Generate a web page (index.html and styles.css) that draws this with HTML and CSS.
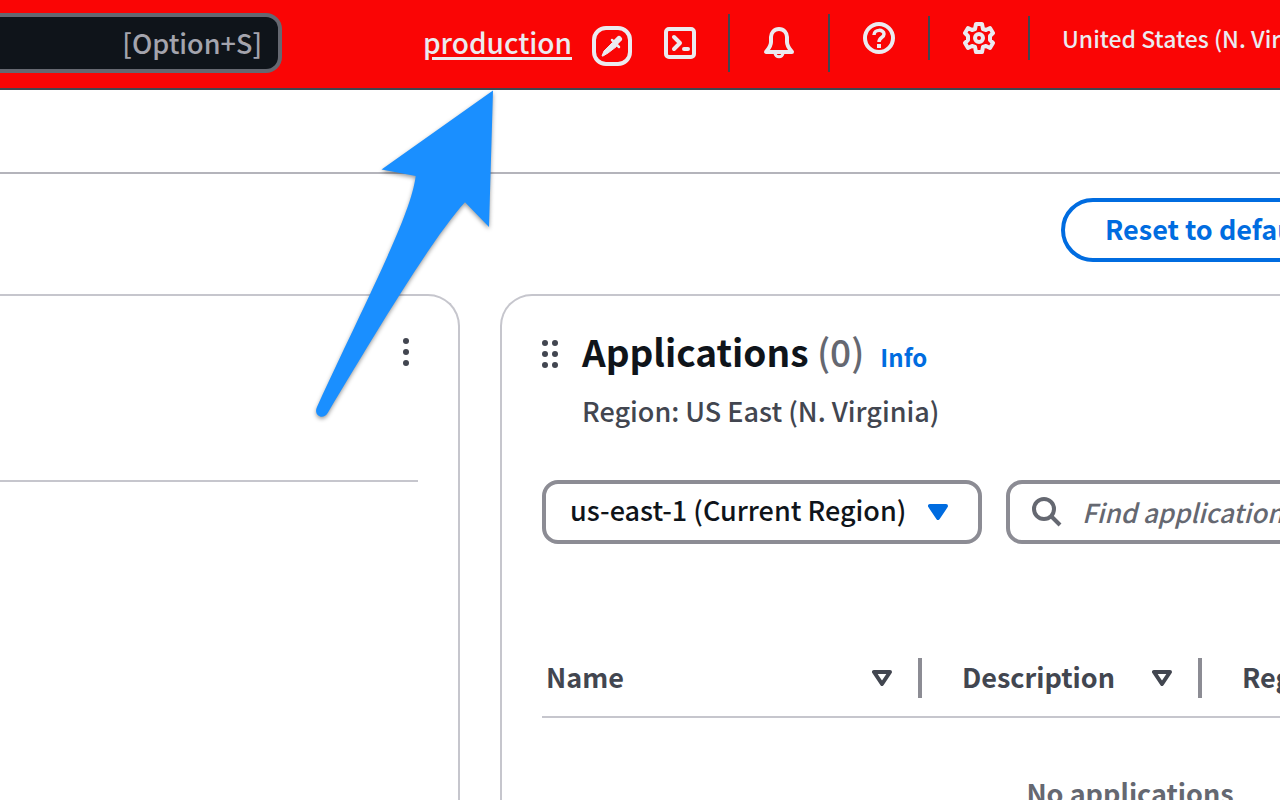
FILE: index.html
```html
<!DOCTYPE html>
<html lang="en">
<head>
<meta charset="utf-8">
<title>Console Home</title>
<link rel="stylesheet" href="styles.css">
</head>
<body>
<header class="topbar">
  <input class="topbar-search" type="text" aria-label="Search" placeholder="[Option+S]">
  <nav class="account">
    <a class="account-link" href="#">production</a>
    <button class="icon-button" type="button" aria-label="Pick colour">
      <svg width="40" height="40" viewBox="0 0 40 40" fill="none">
        <rect x="2" y="2" width="36" height="36" rx="12" stroke="currentColor" stroke-width="4"/>
        <path d="M10 30l2-5 8.500-8.500 4 4L16 27l-5 3z" fill="currentColor" stroke="currentColor"/>
        <path d="M20 14l7 7" stroke="currentColor" stroke-width="2.500" stroke-linecap="round"/>
        <path d="M24 16l3-3" stroke="currentColor" stroke-width="6" stroke-linecap="round"/>
      </svg>
    </button>
  </nav>
  <nav class="tools tools-main">
    <button class="icon-button tool tool-shell" type="button" aria-label="CloudShell">
      <svg width="32" height="32" viewBox="0 0 32 32" fill="none" stroke="currentColor" stroke-width="4" stroke-linejoin="round" stroke-linecap="round">
        <rect x="2" y="2" width="28" height="28" rx="3"/>
        <path d="M10 10l6 6-6 6M20 22h4"/>
      </svg>
    </button>
    <button class="icon-button tool" type="button" aria-label="Notifications">
      <svg width="32" height="32" viewBox="0 0 32 32" fill="none" stroke="currentColor" stroke-width="4" stroke-linejoin="round">
        <path d="M16 2c-5 0-8 4-8 8v5c0 4-2 6-5 10h26c-3-4-5-6-5-10v-5c0-4-3-8-8-8z"/>
        <path d="M12 26c0 5 8 5 8 0" stroke-width="3"/>
      </svg>
    </button>
  </nav>
  <nav class="tools tools-side">
    <button class="icon-button tool" type="button" aria-label="Help">
      <svg width="32" height="32" viewBox="0 0 32 32" fill="none" stroke="currentColor" stroke-width="4">
        <circle cx="16" cy="16" r="14"/>
        <path d="M11 13c0-6 10-6 10-1 0 4-5 3-5 8" stroke-width="3.500"/>
        <path d="M16 22v4"/>
      </svg>
    </button>
    <button class="icon-button tool" type="button" aria-label="Settings">
      <svg width="32" height="32" viewBox="0 0 32 32" fill="none" stroke="currentColor" stroke-width="4" stroke-linejoin="round">
        <path d="M13 2h6l1 5 3 1 4-2 3 5-3 3v4l3 3-3 5-4-2-3 1-1 5h-6l-1-5-3-1-4 2-3-5 3-3v-4l-3-3 3-5 4 2 3-1z"/>
        <circle cx="16" cy="16" r="4"/>
      </svg>
    </button>
    <button class="icon-button region" type="button">United States (N. Virginia)</button>
  </nav>
</header>
<div class="subbar"></div>
<main class="page">
  <div class="actions">
    <button class="reset" type="button">Reset to default layout</button>
  </div>
  <div class="board">
    <section class="card card-left" aria-label="Widget">
      <div class="card-tools">
        <button class="icon-button" type="button" aria-label="More actions">
          <svg width="24" height="32" viewBox="0 0 24 32" fill="currentColor"><circle cx="12" cy="5" r="3"/><circle cx="12" cy="16" r="3"/><circle cx="12" cy="27" r="3"/></svg>
        </button>
      </div>
    </section>
    <section class="card card-apps">
      <div class="card-head">
        <svg class="grip" width="16" height="28" viewBox="0 0 16 28" fill="currentColor"><circle cx="3" cy="3" r="3"/><circle cx="13" cy="3" r="3"/><circle cx="3" cy="14" r="3"/><circle cx="13" cy="14" r="3"/><circle cx="3" cy="25" r="3"/><circle cx="13" cy="25" r="3"/></svg>
        <div>
          <div class="title-row">
            <h2 class="title">Applications <span class="count">(0)</span></h2>
            <a class="info" href="#">Info</a>
          </div>
          <p class="subtitle">Region: US East (N. Virginia)</p>
        </div>
      </div>
      <div class="filters">
        <div class="select-wrap">
          <select class="select" aria-label="Region">
            <option>us-east-1 (Current Region)</option>
          </select>
          <svg class="caret" width="20" height="16" viewBox="0 0 20 16"><path d="M2 2h16l-8 12z" fill="currentColor" stroke="currentColor" stroke-width="4" stroke-linejoin="round"/></svg>
        </div>
        <label class="find">
          <svg width="30" height="30" viewBox="0 0 30 30" fill="none" stroke="currentColor" stroke-width="4"><circle cx="12" cy="12" r="10"/><path d="M19 19l9 9"/></svg>
          <input class="find-input" type="text" aria-label="Find applications" placeholder="Find applications">
        </label>
      </div>
      <table class="apps">
        <colgroup><col class="col-name"><col class="col-mid"><col><col></colgroup>
        <thead>
          <tr>
            <th><div class="th"><span class="th-text">Name</span> <svg width="20" height="16" viewBox="0 0 20 16"><path d="M2 2h16l-8 12z" fill="none" stroke="currentColor" stroke-width="4" stroke-linejoin="round"/></svg></div></th>
            <th><div class="th"><span class="th-text">Description</span> <svg width="20" height="16" viewBox="0 0 20 16"><path d="M2 2h16l-8 12z" fill="none" stroke="currentColor" stroke-width="4" stroke-linejoin="round"/></svg></div></th>
            <th colspan="2"><div class="th"><span class="th-text">Region</span></div></th>
          </tr>
        </thead>
        <tbody>
          <tr><td class="empty" colspan="4">No applications</td></tr>
        </tbody>
      </table>
    </section>
  </div>
</main>
<svg class="pointer" width="190" height="336" viewBox="310 86 190 336" aria-hidden="true">
  <path d="M493 90.500L381.500 169.500 415.700 176C411 215 370 292 317 407C313 415 323 421 328 412.500C375 334 433 237 465 202.300L489 227z" fill="#1a8fff"/>
</svg>
</body>
</html>
```
FILE: styles.css
```css
* {
  box-sizing: border-box;
}

body {
  margin: 0;
  min-height: 100vh;
  overflow: hidden;
  background: #fff;
  color: #0f141a;
  font-family: "Noto Sans CJK JP", "Noto Sans", sans-serif;
  font-size: 27px;
  font-weight: 500;
  line-height: 40px;
}

button,
input,
select {
  font: inherit;
}

.topbar {
  display: flex;
  height: 90px;
  overflow: hidden;
  background: #fa0505;
  border-bottom: 2px solid #424650;
  color: #ebebf0;
}

.topbar-search {
  flex: none;
  width: 282px;
  height: 60px;
  margin: 13px 0 0;
  padding: 0 16px 2px;
  appearance: none;
  background: #0f141a;
  border: 4px solid #656871;
  border-left: 0;
  border-radius: 0 16px 16px 0;
  color: #a4a4ad;
  text-align: right;
}

.topbar-search::placeholder {
  color: #a4a4ad;
  opacity: 1;
}

.icon-button {
  display: flex;
  align-items: center;
  justify-content: center;
  flex: none;
  padding: 0;
  background: none;
  border: 0;
  color: inherit;
}

.account {
  display: flex;
  align-items: center;
  justify-content: flex-end;
  gap: 20px;
  flex: none;
  width: 350px;
  height: 92px;
}

.account-link {
  padding-bottom: 8px;
  color: inherit;
  font-size: 28px;
  text-decoration-thickness: 3px;
  text-underline-offset: 3px;
}

.tools {
  display: flex;
  flex: none;
}

.tool {
  width: 100px;
  border-right: 2px solid #424650;
}

.tool-shell {
  width: 98px;
}

.tools-main {
  height: 58px;
  margin: 14px 0 0;
}

.tools-side {
  height: 44px;
  margin: 16px 0 0;
}

.region {
  padding-left: 32px;
  font-size: 23px;
  white-space: nowrap;
}

.subbar {
  height: 84px;
  border-bottom: 2px solid #b4b4bb;
}

.actions {
  display: flex;
  padding: 24px 0 32px 1061px;
}

.reset {
  flex: none;
  height: 64px;
  padding: 0 40px 2px;
  background: #fff;
  border: 4px solid #006ce0;
  border-radius: 32px;
  color: #006ce0;
  font-weight: 700;
  white-space: nowrap;
}

.board {
  display: grid;
  grid-template-columns: 460px minmax(1260px, 1fr);
  gap: 40px;
  min-height: calc(100vh - 294px);
}

.card {
  border: 2px solid #c6c6cd;
  border-bottom: 0;
  border-radius: 32px 32px 0 0;
  padding: 30px 40px 0;
}

.card-left {
  border-left: 0;
  border-top-left-radius: 0;
  padding-left: 0;
}

.card-tools {
  display: flex;
  justify-content: flex-end;
  align-items: flex-start;
  height: 156px;
  padding-top: 10px;
  border-bottom: 2px solid #c6c6cd;
  color: #424650;
}

.card-head {
  display: flex;
  gap: 24px;
}

.grip {
  flex: none;
  margin-top: 14px;
  color: #424650;
}

.title-row {
  display: flex;
  align-items: baseline;
  gap: 16px;
}

.title {
  margin: 0;
  font-size: 37px;
  line-height: 50px;
}

.count {
  color: #656871;
  font-weight: 500;
}

.info {
  color: #006ce0;
  font-size: 24px;
  font-weight: 700;
  text-decoration: none;
}

.subtitle {
  margin: 14px 0 0;
  color: #424650;
}

.filters {
  display: flex;
  gap: 24px;
  margin-top: 49px;
}

.select-wrap {
  position: relative;
  flex: none;
  width: 440px;
}

.select {
  width: 100%;
  height: 64px;
  padding: 0 60px 4px 24px;
  appearance: none;
  background: #fff;
  border: 4px solid #8c8c94;
  border-radius: 16px;
  color: #0f141a;
}

.caret {
  position: absolute;
  top: 24px;
  right: 34px;
  color: #006ce0;
  pointer-events: none;
}

.find {
  display: flex;
  align-items: center;
  gap: 20px;
  flex: 1;
  height: 64px;
  padding: 0 22px;
  border: 4px solid #8c8c94;
  border-radius: 16px;
  color: #656871;
}

.find-input {
  flex: 1;
  min-width: 0;
  padding: 0;
  border: 0;
  outline: 0;
  background: none;
  font-size: 26px;
  font-style: italic;
}

.find-input::placeholder {
  color: #656871;
  opacity: 1;
}

.apps {
  width: 100%;
  margin-top: 96px;
  border-collapse: collapse;
  table-layout: fixed;
}

.col-name {
  width: 380px;
}

.col-mid {
  width: 280px;
}

.apps th {
  padding: 18px 0;
  border-bottom: 2px solid #c6c6cd;
  color: #424650;
  text-align: left;
}

.th {
  display: flex;
  align-items: center;
  justify-content: space-between;
  height: 40px;
  padding: 0 26px 0 40px;
  border-right: 4px solid #8c8c94;
}

.th-text {
  padding-bottom: 2px;
}

.apps th:first-child .th {
  padding-left: 4px;
}

.apps th:last-child .th {
  border-right: 0;
}

.empty {
  padding: 55px 0 0;
  color: #656871;
  font-weight: 700;
  text-align: center;
}

.pointer {
  position: absolute;
  top: 86px;
  left: 310px;
  filter: drop-shadow(0 2px 2px rgba(0, 0, 0, 0.4));
  pointer-events: none;
}
```
